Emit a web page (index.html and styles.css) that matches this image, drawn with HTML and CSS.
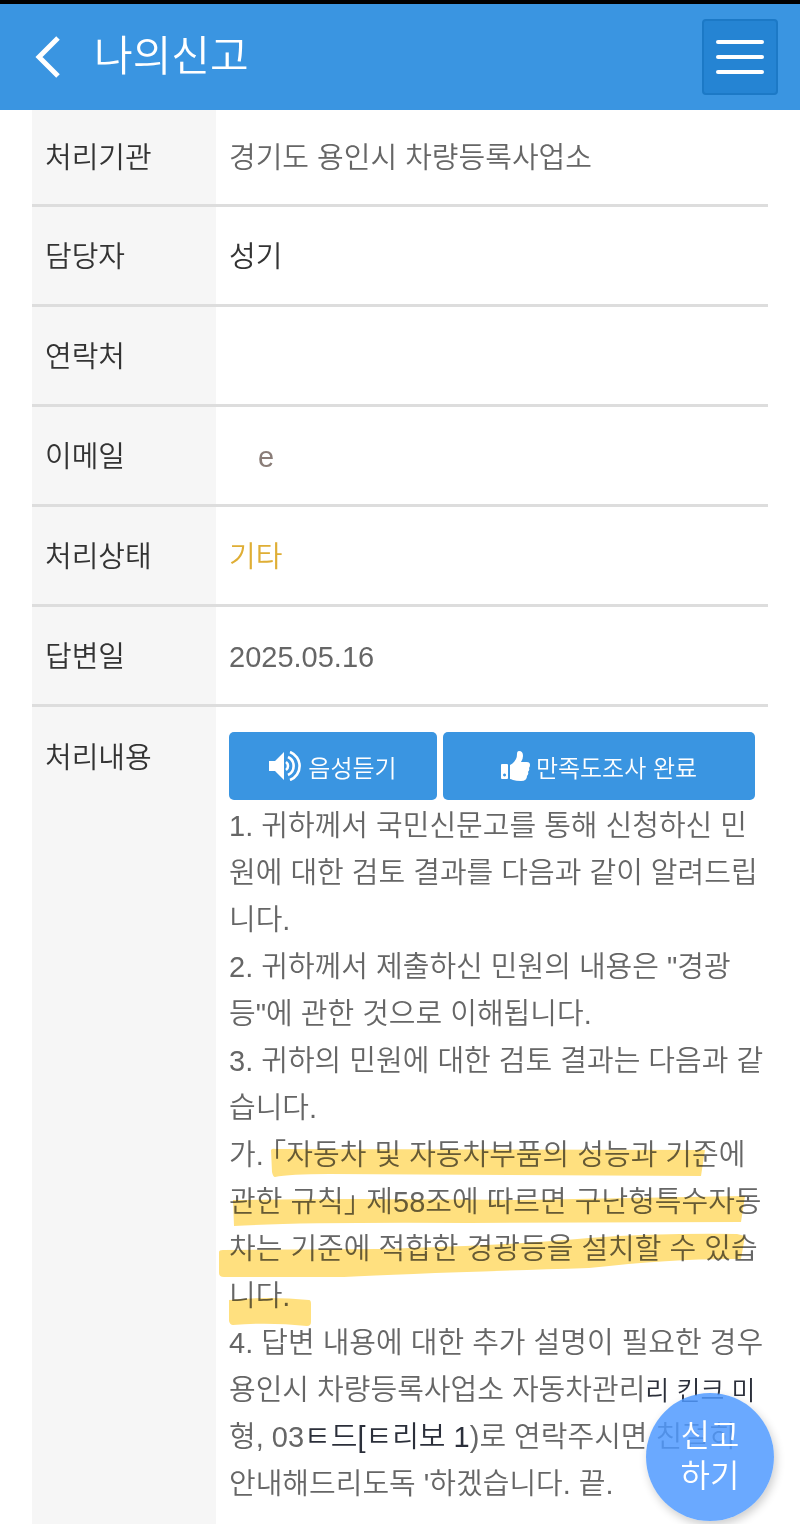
FILE: index.html
```html
<!DOCTYPE html>
<html lang="ko">
<head>
    <meta charset="UTF-8">
    <meta name="viewport" content="width=device-width, initial-scale=1.0">
    <title>나의신고</title>
    <link rel="stylesheet" href="styles.css">
</head>
<body>
    <header class="header">
        <a class="back" href="#" aria-label="뒤로">
            <svg width="26" height="42" viewBox="0 0 26 42"><path d="M23 2 L4 21 L23 40" fill="none" stroke="#fff" stroke-width="5"/></svg>
        </a>
        <h1 class="title">나의신고</h1>
        <button class="menu-button" type="button" aria-label="메뉴">
            <span class="bar"></span>
            <span class="bar"></span>
            <span class="bar"></span>
        </button>
    </header>

    <main class="content">
        <table class="detail">
            <tr>
                <th scope="row">처리기관</th>
                <td>경기도 용인시 차량등록사업소</td>
            </tr>
            <tr>
                <th scope="row">담당자</th>
                <td class="dark">성기</td>
            </tr>
            <tr>
                <th scope="row">연락처</th>
                <td></td>
            </tr>
            <tr>
                <th scope="row">이메일</th>
                <td><span class="email">e</span></td>
            </tr>
            <tr>
                <th scope="row">처리상태</th>
                <td class="status">기타</td>
            </tr>
            <tr>
                <th scope="row">답변일</th>
                <td>2025.05.16</td>
            </tr>
            <tr class="answer-row">
                <th scope="row">처리내용</th>
                <td>
                    <div class="buttons">
                        <button class="btn btn-listen" type="button">
                            <svg width="33" height="30" viewBox="0 0 33 30">
                                <path d="M0 10h6l9-9v28l-9-9H0z" fill="#fff"/>
                                <g fill="none" stroke="#fff" stroke-width="2.600">
                                    <path d="M17 11a5 5 0 0 1 0 8"/>
                                    <path d="M19 6a10 10 0 0 1 0 18"/>
                                    <path d="M21 1a15 15 0 0 1 0 28"/>
                                </g>
                            </svg>
                            음성듣기
                        </button>
                        <button class="btn btn-survey" type="button">
                            <svg width="29" height="30" viewBox="0 0 29 30">
                                <path fill="#fff" fill-rule="evenodd" d="M1 13h5q1 0 1 1v13q0 1-1 1H1q-1 0-1-1V14q0-1 1-1zM3.500 22.500a1.500 1.500 0 1 0 .1 0z"/>
                                <path fill="#fff" d="M9 14q4-2 6-6 1-2 1-5 0-3 2-3 4 0 4 5 0 3-2 6h6q3 0 3 3 0 2-1 3 1 2-1 4 1 2-1 4 0 5-6 5-5 0-8-1-2-1-3-1z"/>
                            </svg>
                            만족도조사 완료
                        </button>
                    </div>
                    <div class="answer">
                        <p>1. 귀하께서 국민신문고를 통해 신청하신 민<br>원에 대한 검토 결과를 다음과 같이 알려드립<br>니다.</p>
                        <p>2. 귀하께서 제출하신 민원의 내용은 "경광<br>등"에 관한 것으로 이해됩니다.</p>
                        <p>3. 귀하의 민원에 대한 검토 결과는 다음과 같<br>습니다.</p>
                        <p class="marked">
                            가. 「자동차 및 자동차부품의 성능과 기준에<br>관한 규칙」 제58조에 따르면 구난형특수자동<br>차는 기준에 적합한 경광등을 설치할 수 있습<br>니다.
                            <svg class="marker" width="532" height="196" viewBox="0 0 532 196" aria-hidden="true">
                                <path d="M52 18Q53 16 57 17L486 18 482 44 110 42Q70 42 56 45 54 45 53 40z"/>
                                <path d="M14 68Q120 66 300 68L526 64 522 90 250 91Q80 90 15 94z"/>
                                <path d="M0 120Q0 118 4 118L160 117Q300 113 370 106 440 101 518 102L526 104 522 127Q460 126 370 136 200 141 125 145L5 145Q0 145 0 141z"/>
                                <path d="M10 168Q50 164 90 168 92 168 92 172L92 190Q92 194 88 194 50 190 14 193 11 193 10 189z"/>
                            </svg>
                        </p>
                        <p>4. 답변 내용에 대한 추가 설명이 필요한 경우<br>용인시 차량등록사업소 자동차관리<span class="smudge small">리 킨크 미</span><br>형, 03<span class="smudge">ㅌ드[ㅌ리보 1</span>)로 연락주시면 친절히<br>안내해드리도독 '하겠습니다. 끝.</p>
                    </div>
                </td>
            </tr>
        </table>
    </main>

    <!-- Floating report button -->
    <button class="report-button" type="button">신고<br>하기</button>
</body>
</html>
```
FILE: styles.css
```css
* {
    box-sizing: border-box;
}

body {
    margin: 0;
    border-top: 4px solid #000;
    background-color: #fff;
    color: #666;
    font-family: "Liberation Sans", "Noto Sans CJK KR", sans-serif;
    font-size: 29px;
    font-weight: 350;
    line-height: 47px;
}

button {
    font-family: inherit;
    font-weight: inherit;
    cursor: pointer;
}

.header {
    display: flex;
    align-items: center;
    height: 106px;
    padding: 0 22px 0 35px;
    background-color: #3a95e1;
}

.back {
    display: flex;
}

.title {
    flex: 1;
    margin: 0 0 0 33px;
    color: #fff;
    font-size: 42px;
    font-weight: 350;
    line-height: 60px;
}

.menu-button {
    display: flex;
    flex-direction: column;
    align-items: center;
    justify-content: center;
    gap: 11px;
    width: 76px;
    height: 76px;
    padding: 0;
    border: 2px solid #1c79c6;
    border-radius: 4px;
    background-color: #2584d3;
}

.bar {
    width: 48px;
    height: 4px;
    border-radius: 2px;
    background-color: #fff;
}

.content {
    padding: 0 32px;
}

/* Report details */
.detail {
    width: 100%;
    border-collapse: separate;
    border-spacing: 0;
    table-layout: fixed;
}

.detail th,
.detail td {
    height: 100px;
    padding: 3px 0 0 13px;
    border-bottom: 3px solid #ddd;
    text-align: left;
}

.detail th {
    width: 184px;
    background-color: #f6f6f6;
    color: #333;
    font-weight: 350;
}

.detail tr:first-child th,
.detail tr:first-child td {
    height: 97px;
}

.detail .dark {
    color: #333;
}

.detail .status {
    color: #dfae35;
}

.email {
    padding-left: 29px;
    color: #8a7d78;
}

.detail .answer-row th,
.detail .answer-row td {
    padding-top: 25px;
    padding-bottom: 16px;
    border-bottom: 0;
    vertical-align: top;
}

.detail .answer-row th {
    padding-top: 28px;
}

.buttons {
    display: flex;
    gap: 6px;
    margin: 0 13px 3px 0;
}

.btn {
    display: flex;
    align-items: center;
    justify-content: center;
    gap: 6px;
    height: 68px;
    padding: 0;
    border: 0;
    border-radius: 5px;
    background-color: #3a95e1;
    color: #fff;
    font-size: 24px;
}

.btn-listen {
    flex: 2;
}

.btn-survey {
    flex: 3;
}

.answer p {
    margin: 0;
}

.marked {
    position: relative;
    font-feature-settings: "halt";
}

/* Highlighter strokes over the quoted rule */
.marker {
    position: absolute;
    top: 0;
    left: -10px;
    fill: #ffe07f;
    mix-blend-mode: multiply;
    pointer-events: none;
}

.smudge {
    color: #2b2f3a;
    line-height: 1;
}

.small {
    font-size: 26px;
}

.report-button {
    position: fixed;
    right: 26px;
    bottom: 3px;
    width: 128px;
    height: 128px;
    padding: 0 0 2px;
    border: 0;
    border-radius: 50%;
    background-color: rgba(77, 152, 255, 0.84);
    box-shadow: 2px 4px 10px rgba(0, 0, 0, 0.2);
    color: #fff;
    font-size: 32px;
    line-height: 40px;
}
```
